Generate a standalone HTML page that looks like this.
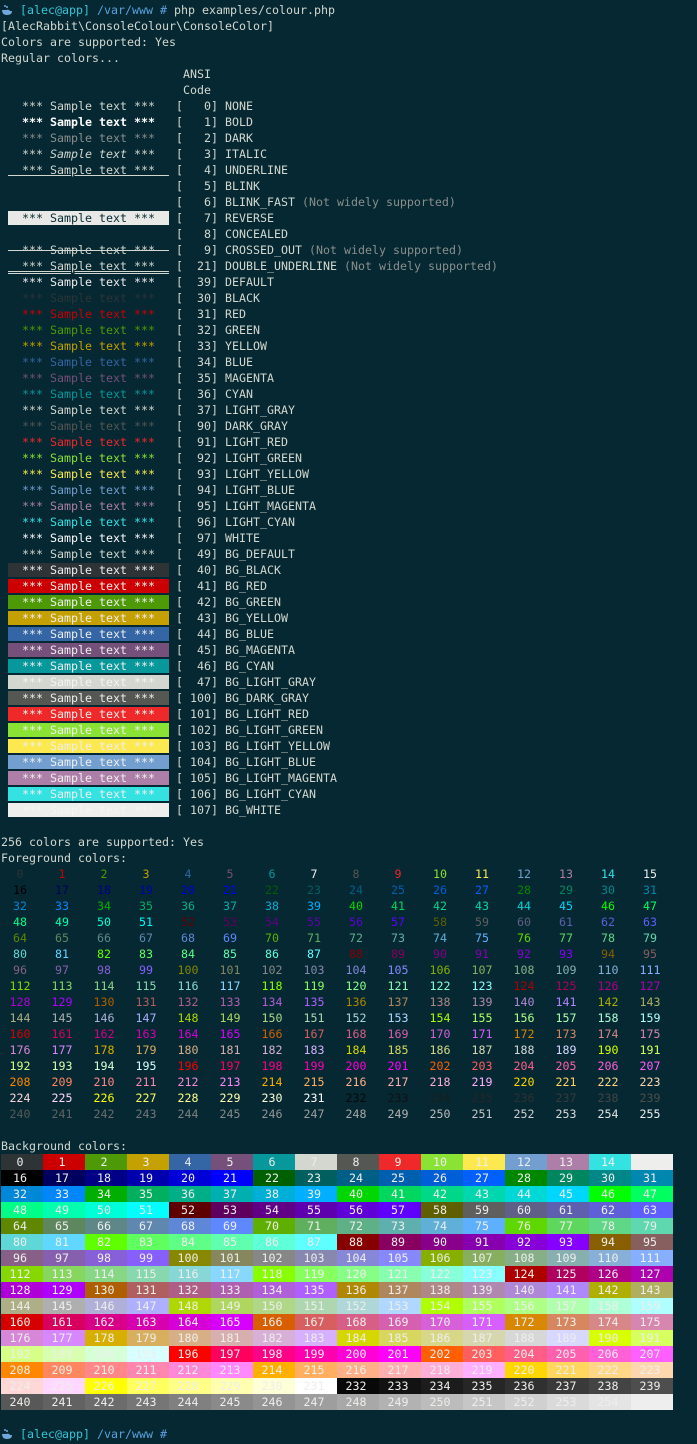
<!DOCTYPE html>
<html><head><meta charset="utf-8"><style>
html,body{margin:0;padding:0;background:#052832;}
body{width:697px;height:1444px;overflow:hidden;font-family:"DejaVu Sans Mono","Liberation Mono",monospace;font-size:11.63px;color:#d3d7cf;padding-top:2px;box-sizing:border-box;}
.l{white-space:pre;height:16px;line-height:16px;padding-left:1px;}
.p1{color:#34c6d6}.p2{color:#5aa2e0}
.n{color:#8a8f8c}
.bo{font-weight:bold;color:#fff}.dm{color:#8a8f8c}.it{font-style:italic}
.u{text-decoration:underline}.x{text-decoration:line-through}.du{text-decoration:underline double}
.rv{background:#e8e8e6;color:#052832}
.g{display:flex;margin-left:1px;height:16px;line-height:16px}
.g i{font-style:normal;width:42px;text-align:center;padding-right:4px;box-sizing:border-box;}
.bg i{color:#eeeeec}
svg{vertical-align:-2px}
</style></head><body>
<div class="l"><svg width="12" height="12" viewBox="0 0 12 12"><path d="M1 6 Q1 11 6 11 Q11 11 11 7 L9 7 Q8 5 5 6 Z" fill="#6fa8dc"/><circle cx="4" cy="2" r="1" fill="#6fa8dc"/><circle cx="6" cy="3" r="1" fill="#6fa8dc"/></svg> <span class="p1">[alec@app]</span> <span class="p2">/var/www #</span> php examples/colour.php</div>
<div class="l">[AlecRabbit\ConsoleColour\ConsoleColor]</div>
<div class="l">Colors are supported: Yes</div>
<div class="l">Regular colors...</div>
<div class="l">                          ANSI</div>
<div class="l">                          Code</div>
<div class="l"> <span>  *** Sample text ***  </span> [   0] NONE</div>
<div class="l"> <span class="bo">  *** Sample text ***  </span> [   1] BOLD</div>
<div class="l"> <span class="dm">  *** Sample text ***  </span> [   2] DARK</div>
<div class="l"> <span class="it">  *** Sample text ***  </span> [   3] ITALIC</div>
<div class="l"> <span class="u">  *** Sample text ***  </span> [   4] UNDERLINE</div>
<div class="l">                         [   5] BLINK</div>
<div class="l">                         [   6] BLINK_FAST <span class="n">(Not widely supported)</span></div>
<div class="l"> <span class="rv">  *** Sample text ***  </span> [   7] REVERSE</div>
<div class="l">                         [   8] CONCEALED</div>
<div class="l"> <span class="x">  *** Sample text ***  </span> [   9] CROSSED_OUT <span class="n">(Not widely supported)</span></div>
<div class="l"> <span class="du">  *** Sample text ***  </span> [  21] DOUBLE_UNDERLINE <span class="n">(Not widely supported)</span></div>
<div class="l"> <span style="color:#eeeeec">  *** Sample text ***  </span> [  39] DEFAULT</div>
<div class="l"> <span style="color:#2e3436">  *** Sample text ***  </span> [  30] BLACK</div>
<div class="l"> <span style="color:#cc0000">  *** Sample text ***  </span> [  31] RED</div>
<div class="l"> <span style="color:#4e9a06">  *** Sample text ***  </span> [  32] GREEN</div>
<div class="l"> <span style="color:#c4a000">  *** Sample text ***  </span> [  33] YELLOW</div>
<div class="l"> <span style="color:#3465a4">  *** Sample text ***  </span> [  34] BLUE</div>
<div class="l"> <span style="color:#75507b">  *** Sample text ***  </span> [  35] MAGENTA</div>
<div class="l"> <span style="color:#06989a">  *** Sample text ***  </span> [  36] CYAN</div>
<div class="l"> <span style="color:#d3d7cf">  *** Sample text ***  </span> [  37] LIGHT_GRAY</div>
<div class="l"> <span style="color:#555753">  *** Sample text ***  </span> [  90] DARK_GRAY</div>
<div class="l"> <span style="color:#ef2929">  *** Sample text ***  </span> [  91] LIGHT_RED</div>
<div class="l"> <span style="color:#8ae234">  *** Sample text ***  </span> [  92] LIGHT_GREEN</div>
<div class="l"> <span style="color:#fce94f">  *** Sample text ***  </span> [  93] LIGHT_YELLOW</div>
<div class="l"> <span style="color:#729fcf">  *** Sample text ***  </span> [  94] LIGHT_BLUE</div>
<div class="l"> <span style="color:#ad7fa8">  *** Sample text ***  </span> [  95] LIGHT_MAGENTA</div>
<div class="l"> <span style="color:#34e2e2">  *** Sample text ***  </span> [  96] LIGHT_CYAN</div>
<div class="l"> <span style="color:#ffffff">  *** Sample text ***  </span> [  97] WHITE</div>
<div class="l"> <span>  *** Sample text ***  </span> [  49] BG_DEFAULT</div>
<div class="l"> <span style="background:#2e3436;color:#eee">  *** Sample text ***  </span> [  40] BG_BLACK</div>
<div class="l"> <span style="background:#cc0000;color:#eee">  *** Sample text ***  </span> [  41] BG_RED</div>
<div class="l"> <span style="background:#4e9a06;color:#eee">  *** Sample text ***  </span> [  42] BG_GREEN</div>
<div class="l"> <span style="background:#c4a000;color:#eee">  *** Sample text ***  </span> [  43] BG_YELLOW</div>
<div class="l"> <span style="background:#3465a4;color:#eee">  *** Sample text ***  </span> [  44] BG_BLUE</div>
<div class="l"> <span style="background:#75507b;color:#eee">  *** Sample text ***  </span> [  45] BG_MAGENTA</div>
<div class="l"> <span style="background:#06989a;color:#eee">  *** Sample text ***  </span> [  46] BG_CYAN</div>
<div class="l"> <span style="background:#d3d7cf;color:#f4f4f4">  *** Sample text ***  </span> [  47] BG_LIGHT_GRAY</div>
<div class="l"> <span style="background:#555753;color:#eee">  *** Sample text ***  </span> [ 100] BG_DARK_GRAY</div>
<div class="l"> <span style="background:#ef2929;color:#eee">  *** Sample text ***  </span> [ 101] BG_LIGHT_RED</div>
<div class="l"> <span style="background:#8ae234;color:#eee">  *** Sample text ***  </span> [ 102] BG_LIGHT_GREEN</div>
<div class="l"> <span style="background:#fce94f;color:#eee">  *** Sample text ***  </span> [ 103] BG_LIGHT_YELLOW</div>
<div class="l"> <span style="background:#729fcf;color:#eee">  *** Sample text ***  </span> [ 104] BG_LIGHT_BLUE</div>
<div class="l"> <span style="background:#ad7fa8;color:#eee">  *** Sample text ***  </span> [ 105] BG_LIGHT_MAGENTA</div>
<div class="l"> <span style="background:#34e2e2;color:#eee">  *** Sample text ***  </span> [ 106] BG_LIGHT_CYAN</div>
<div class="l"> <span style="background:#eeeeec;color:#f4f4f4">  *** Sample text ***  </span> [ 107] BG_WHITE</div>
<div class="l"> </div>
<div class="l">256 colors are supported: Yes</div>
<div class="l">Foreground colors:</div>
<div class="g"><i style="color:#2e3436">0</i><i style="color:#cc0000">1</i><i style="color:#4e9a06">2</i><i style="color:#c4a000">3</i><i style="color:#3465a4">4</i><i style="color:#75507b">5</i><i style="color:#06989a">6</i><i style="color:#eeeeec">7</i><i style="color:#555753">8</i><i style="color:#ef2929">9</i><i style="color:#8ae234">10</i><i style="color:#fce94f">11</i><i style="color:#729fcf">12</i><i style="color:#ad7fa8">13</i><i style="color:#34e2e2">14</i><i style="color:#eeeeec">15</i></div>
<div class="g"><i style="color:#000000">16</i><i style="color:#00005f">17</i><i style="color:#000087">18</i><i style="color:#0000af">19</i><i style="color:#0000d7">20</i><i style="color:#0000ff">21</i><i style="color:#005f00">22</i><i style="color:#005f5f">23</i><i style="color:#005f87">24</i><i style="color:#005faf">25</i><i style="color:#005fd7">26</i><i style="color:#005fff">27</i><i style="color:#008700">28</i><i style="color:#00875f">29</i><i style="color:#008787">30</i><i style="color:#0087af">31</i></div>
<div class="g"><i style="color:#0087d7">32</i><i style="color:#0087ff">33</i><i style="color:#00af00">34</i><i style="color:#00af5f">35</i><i style="color:#00af87">36</i><i style="color:#00afaf">37</i><i style="color:#00afd7">38</i><i style="color:#00afff">39</i><i style="color:#00d700">40</i><i style="color:#00d75f">41</i><i style="color:#00d787">42</i><i style="color:#00d7af">43</i><i style="color:#00d7d7">44</i><i style="color:#00d7ff">45</i><i style="color:#00ff00">46</i><i style="color:#00ff5f">47</i></div>
<div class="g"><i style="color:#00ff87">48</i><i style="color:#00ffaf">49</i><i style="color:#00ffd7">50</i><i style="color:#00ffff">51</i><i style="color:#5f0000">52</i><i style="color:#5f005f">53</i><i style="color:#5f0087">54</i><i style="color:#5f00af">55</i><i style="color:#5f00d7">56</i><i style="color:#5f00ff">57</i><i style="color:#5f5f00">58</i><i style="color:#5f5f5f">59</i><i style="color:#5f5f87">60</i><i style="color:#5f5faf">61</i><i style="color:#5f5fd7">62</i><i style="color:#5f5fff">63</i></div>
<div class="g"><i style="color:#5f8700">64</i><i style="color:#5f875f">65</i><i style="color:#5f8787">66</i><i style="color:#5f87af">67</i><i style="color:#5f87d7">68</i><i style="color:#5f87ff">69</i><i style="color:#5faf00">70</i><i style="color:#5faf5f">71</i><i style="color:#5faf87">72</i><i style="color:#5fafaf">73</i><i style="color:#5fafd7">74</i><i style="color:#5fafff">75</i><i style="color:#5fd700">76</i><i style="color:#5fd75f">77</i><i style="color:#5fd787">78</i><i style="color:#5fd7af">79</i></div>
<div class="g"><i style="color:#5fd7d7">80</i><i style="color:#5fd7ff">81</i><i style="color:#5fff00">82</i><i style="color:#5fff5f">83</i><i style="color:#5fff87">84</i><i style="color:#5fffaf">85</i><i style="color:#5fffd7">86</i><i style="color:#5fffff">87</i><i style="color:#870000">88</i><i style="color:#87005f">89</i><i style="color:#870087">90</i><i style="color:#8700af">91</i><i style="color:#8700d7">92</i><i style="color:#8700ff">93</i><i style="color:#875f00">94</i><i style="color:#875f5f">95</i></div>
<div class="g"><i style="color:#875f87">96</i><i style="color:#875faf">97</i><i style="color:#875fd7">98</i><i style="color:#875fff">99</i><i style="color:#878700">100</i><i style="color:#87875f">101</i><i style="color:#878787">102</i><i style="color:#8787af">103</i><i style="color:#8787d7">104</i><i style="color:#8787ff">105</i><i style="color:#87af00">106</i><i style="color:#87af5f">107</i><i style="color:#87af87">108</i><i style="color:#87afaf">109</i><i style="color:#87afd7">110</i><i style="color:#87afff">111</i></div>
<div class="g"><i style="color:#87d700">112</i><i style="color:#87d75f">113</i><i style="color:#87d787">114</i><i style="color:#87d7af">115</i><i style="color:#87d7d7">116</i><i style="color:#87d7ff">117</i><i style="color:#87ff00">118</i><i style="color:#87ff5f">119</i><i style="color:#87ff87">120</i><i style="color:#87ffaf">121</i><i style="color:#87ffd7">122</i><i style="color:#87ffff">123</i><i style="color:#af0000">124</i><i style="color:#af005f">125</i><i style="color:#af0087">126</i><i style="color:#af00af">127</i></div>
<div class="g"><i style="color:#af00d7">128</i><i style="color:#af00ff">129</i><i style="color:#af5f00">130</i><i style="color:#af5f5f">131</i><i style="color:#af5f87">132</i><i style="color:#af5faf">133</i><i style="color:#af5fd7">134</i><i style="color:#af5fff">135</i><i style="color:#af8700">136</i><i style="color:#af875f">137</i><i style="color:#af8787">138</i><i style="color:#af87af">139</i><i style="color:#af87d7">140</i><i style="color:#af87ff">141</i><i style="color:#afaf00">142</i><i style="color:#afaf5f">143</i></div>
<div class="g"><i style="color:#afaf87">144</i><i style="color:#afafaf">145</i><i style="color:#afafd7">146</i><i style="color:#afafff">147</i><i style="color:#afd700">148</i><i style="color:#afd75f">149</i><i style="color:#afd787">150</i><i style="color:#afd7af">151</i><i style="color:#afd7d7">152</i><i style="color:#afd7ff">153</i><i style="color:#afff00">154</i><i style="color:#afff5f">155</i><i style="color:#afff87">156</i><i style="color:#afffaf">157</i><i style="color:#afffd7">158</i><i style="color:#afffff">159</i></div>
<div class="g"><i style="color:#d70000">160</i><i style="color:#d7005f">161</i><i style="color:#d70087">162</i><i style="color:#d700af">163</i><i style="color:#d700d7">164</i><i style="color:#d700ff">165</i><i style="color:#d75f00">166</i><i style="color:#d75f5f">167</i><i style="color:#d75f87">168</i><i style="color:#d75faf">169</i><i style="color:#d75fd7">170</i><i style="color:#d75fff">171</i><i style="color:#d78700">172</i><i style="color:#d7875f">173</i><i style="color:#d78787">174</i><i style="color:#d787af">175</i></div>
<div class="g"><i style="color:#d787d7">176</i><i style="color:#d787ff">177</i><i style="color:#d7af00">178</i><i style="color:#d7af5f">179</i><i style="color:#d7af87">180</i><i style="color:#d7afaf">181</i><i style="color:#d7afd7">182</i><i style="color:#d7afff">183</i><i style="color:#d7d700">184</i><i style="color:#d7d75f">185</i><i style="color:#d7d787">186</i><i style="color:#d7d7af">187</i><i style="color:#d7d7d7">188</i><i style="color:#d7d7ff">189</i><i style="color:#d7ff00">190</i><i style="color:#d7ff5f">191</i></div>
<div class="g"><i style="color:#d7ff87">192</i><i style="color:#d7ffaf">193</i><i style="color:#d7ffd7">194</i><i style="color:#d7ffff">195</i><i style="color:#ff0000">196</i><i style="color:#ff005f">197</i><i style="color:#ff0087">198</i><i style="color:#ff00af">199</i><i style="color:#ff00d7">200</i><i style="color:#ff00ff">201</i><i style="color:#ff5f00">202</i><i style="color:#ff5f5f">203</i><i style="color:#ff5f87">204</i><i style="color:#ff5faf">205</i><i style="color:#ff5fd7">206</i><i style="color:#ff5fff">207</i></div>
<div class="g"><i style="color:#ff8700">208</i><i style="color:#ff875f">209</i><i style="color:#ff8787">210</i><i style="color:#ff87af">211</i><i style="color:#ff87d7">212</i><i style="color:#ff87ff">213</i><i style="color:#ffaf00">214</i><i style="color:#ffaf5f">215</i><i style="color:#ffaf87">216</i><i style="color:#ffafaf">217</i><i style="color:#ffafd7">218</i><i style="color:#ffafff">219</i><i style="color:#ffd700">220</i><i style="color:#ffd75f">221</i><i style="color:#ffd787">222</i><i style="color:#ffd7af">223</i></div>
<div class="g"><i style="color:#ffd7d7">224</i><i style="color:#ffd7ff">225</i><i style="color:#ffff00">226</i><i style="color:#ffff5f">227</i><i style="color:#ffff87">228</i><i style="color:#ffffaf">229</i><i style="color:#ffffd7">230</i><i style="color:#ffffff">231</i><i style="color:#080808">232</i><i style="color:#121212">233</i><i style="color:#1c1c1c">234</i><i style="color:#262626">235</i><i style="color:#303030">236</i><i style="color:#3a3a3a">237</i><i style="color:#444444">238</i><i style="color:#4e4e4e">239</i></div>
<div class="g"><i style="color:#585858">240</i><i style="color:#626262">241</i><i style="color:#6c6c6c">242</i><i style="color:#767676">243</i><i style="color:#808080">244</i><i style="color:#8a8a8a">245</i><i style="color:#949494">246</i><i style="color:#9e9e9e">247</i><i style="color:#a8a8a8">248</i><i style="color:#b2b2b2">249</i><i style="color:#bcbcbc">250</i><i style="color:#c6c6c6">251</i><i style="color:#d0d0d0">252</i><i style="color:#dadada">253</i><i style="color:#e4e4e4">254</i><i style="color:#eeeeee">255</i></div>
<div class="l"> </div>
<div class="l">Background colors:</div>
<div class="g bg"><i style="background:#2e3436">0</i><i style="background:#cc0000">1</i><i style="background:#4e9a06">2</i><i style="background:#c4a000">3</i><i style="background:#3465a4">4</i><i style="background:#75507b">5</i><i style="background:#06989a">6</i><i style="background:#d3d7cf">7</i><i style="background:#555753">8</i><i style="background:#ef2929">9</i><i style="background:#8ae234">10</i><i style="background:#fce94f">11</i><i style="background:#729fcf">12</i><i style="background:#ad7fa8">13</i><i style="background:#34e2e2">14</i><i style="background:#eeeeec">15</i></div>
<div class="g bg"><i style="background:#000000">16</i><i style="background:#00005f">17</i><i style="background:#000087">18</i><i style="background:#0000af">19</i><i style="background:#0000d7">20</i><i style="background:#0000ff">21</i><i style="background:#005f00">22</i><i style="background:#005f5f">23</i><i style="background:#005f87">24</i><i style="background:#005faf">25</i><i style="background:#005fd7">26</i><i style="background:#005fff">27</i><i style="background:#008700">28</i><i style="background:#00875f">29</i><i style="background:#008787">30</i><i style="background:#0087af">31</i></div>
<div class="g bg"><i style="background:#0087d7">32</i><i style="background:#0087ff">33</i><i style="background:#00af00">34</i><i style="background:#00af5f">35</i><i style="background:#00af87">36</i><i style="background:#00afaf">37</i><i style="background:#00afd7">38</i><i style="background:#00afff">39</i><i style="background:#00d700">40</i><i style="background:#00d75f">41</i><i style="background:#00d787">42</i><i style="background:#00d7af">43</i><i style="background:#00d7d7">44</i><i style="background:#00d7ff">45</i><i style="background:#00ff00">46</i><i style="background:#00ff5f">47</i></div>
<div class="g bg"><i style="background:#00ff87">48</i><i style="background:#00ffaf">49</i><i style="background:#00ffd7">50</i><i style="background:#00ffff">51</i><i style="background:#5f0000">52</i><i style="background:#5f005f">53</i><i style="background:#5f0087">54</i><i style="background:#5f00af">55</i><i style="background:#5f00d7">56</i><i style="background:#5f00ff">57</i><i style="background:#5f5f00">58</i><i style="background:#5f5f5f">59</i><i style="background:#5f5f87">60</i><i style="background:#5f5faf">61</i><i style="background:#5f5fd7">62</i><i style="background:#5f5fff">63</i></div>
<div class="g bg"><i style="background:#5f8700">64</i><i style="background:#5f875f">65</i><i style="background:#5f8787">66</i><i style="background:#5f87af">67</i><i style="background:#5f87d7">68</i><i style="background:#5f87ff">69</i><i style="background:#5faf00">70</i><i style="background:#5faf5f">71</i><i style="background:#5faf87">72</i><i style="background:#5fafaf">73</i><i style="background:#5fafd7">74</i><i style="background:#5fafff">75</i><i style="background:#5fd700">76</i><i style="background:#5fd75f">77</i><i style="background:#5fd787">78</i><i style="background:#5fd7af">79</i></div>
<div class="g bg"><i style="background:#5fd7d7">80</i><i style="background:#5fd7ff">81</i><i style="background:#5fff00">82</i><i style="background:#5fff5f">83</i><i style="background:#5fff87">84</i><i style="background:#5fffaf">85</i><i style="background:#5fffd7">86</i><i style="background:#5fffff">87</i><i style="background:#870000">88</i><i style="background:#87005f">89</i><i style="background:#870087">90</i><i style="background:#8700af">91</i><i style="background:#8700d7">92</i><i style="background:#8700ff">93</i><i style="background:#875f00">94</i><i style="background:#875f5f">95</i></div>
<div class="g bg"><i style="background:#875f87">96</i><i style="background:#875faf">97</i><i style="background:#875fd7">98</i><i style="background:#875fff">99</i><i style="background:#878700">100</i><i style="background:#87875f">101</i><i style="background:#878787">102</i><i style="background:#8787af">103</i><i style="background:#8787d7">104</i><i style="background:#8787ff">105</i><i style="background:#87af00">106</i><i style="background:#87af5f">107</i><i style="background:#87af87">108</i><i style="background:#87afaf">109</i><i style="background:#87afd7">110</i><i style="background:#87afff">111</i></div>
<div class="g bg"><i style="background:#87d700">112</i><i style="background:#87d75f">113</i><i style="background:#87d787">114</i><i style="background:#87d7af">115</i><i style="background:#87d7d7">116</i><i style="background:#87d7ff">117</i><i style="background:#87ff00">118</i><i style="background:#87ff5f">119</i><i style="background:#87ff87">120</i><i style="background:#87ffaf">121</i><i style="background:#87ffd7">122</i><i style="background:#87ffff">123</i><i style="background:#af0000">124</i><i style="background:#af005f">125</i><i style="background:#af0087">126</i><i style="background:#af00af">127</i></div>
<div class="g bg"><i style="background:#af00d7">128</i><i style="background:#af00ff">129</i><i style="background:#af5f00">130</i><i style="background:#af5f5f">131</i><i style="background:#af5f87">132</i><i style="background:#af5faf">133</i><i style="background:#af5fd7">134</i><i style="background:#af5fff">135</i><i style="background:#af8700">136</i><i style="background:#af875f">137</i><i style="background:#af8787">138</i><i style="background:#af87af">139</i><i style="background:#af87d7">140</i><i style="background:#af87ff">141</i><i style="background:#afaf00">142</i><i style="background:#afaf5f">143</i></div>
<div class="g bg"><i style="background:#afaf87">144</i><i style="background:#afafaf">145</i><i style="background:#afafd7">146</i><i style="background:#afafff">147</i><i style="background:#afd700">148</i><i style="background:#afd75f">149</i><i style="background:#afd787">150</i><i style="background:#afd7af">151</i><i style="background:#afd7d7">152</i><i style="background:#afd7ff">153</i><i style="background:#afff00">154</i><i style="background:#afff5f">155</i><i style="background:#afff87">156</i><i style="background:#afffaf">157</i><i style="background:#afffd7">158</i><i style="background:#afffff">159</i></div>
<div class="g bg"><i style="background:#d70000">160</i><i style="background:#d7005f">161</i><i style="background:#d70087">162</i><i style="background:#d700af">163</i><i style="background:#d700d7">164</i><i style="background:#d700ff">165</i><i style="background:#d75f00">166</i><i style="background:#d75f5f">167</i><i style="background:#d75f87">168</i><i style="background:#d75faf">169</i><i style="background:#d75fd7">170</i><i style="background:#d75fff">171</i><i style="background:#d78700">172</i><i style="background:#d7875f">173</i><i style="background:#d78787">174</i><i style="background:#d787af">175</i></div>
<div class="g bg"><i style="background:#d787d7">176</i><i style="background:#d787ff">177</i><i style="background:#d7af00">178</i><i style="background:#d7af5f">179</i><i style="background:#d7af87">180</i><i style="background:#d7afaf">181</i><i style="background:#d7afd7">182</i><i style="background:#d7afff">183</i><i style="background:#d7d700">184</i><i style="background:#d7d75f">185</i><i style="background:#d7d787">186</i><i style="background:#d7d7af">187</i><i style="background:#d7d7d7">188</i><i style="background:#d7d7ff">189</i><i style="background:#d7ff00">190</i><i style="background:#d7ff5f">191</i></div>
<div class="g bg"><i style="background:#d7ff87">192</i><i style="background:#d7ffaf">193</i><i style="background:#d7ffd7">194</i><i style="background:#d7ffff">195</i><i style="background:#ff0000">196</i><i style="background:#ff005f">197</i><i style="background:#ff0087">198</i><i style="background:#ff00af">199</i><i style="background:#ff00d7">200</i><i style="background:#ff00ff">201</i><i style="background:#ff5f00">202</i><i style="background:#ff5f5f">203</i><i style="background:#ff5f87">204</i><i style="background:#ff5faf">205</i><i style="background:#ff5fd7">206</i><i style="background:#ff5fff">207</i></div>
<div class="g bg"><i style="background:#ff8700">208</i><i style="background:#ff875f">209</i><i style="background:#ff8787">210</i><i style="background:#ff87af">211</i><i style="background:#ff87d7">212</i><i style="background:#ff87ff">213</i><i style="background:#ffaf00">214</i><i style="background:#ffaf5f">215</i><i style="background:#ffaf87">216</i><i style="background:#ffafaf">217</i><i style="background:#ffafd7">218</i><i style="background:#ffafff">219</i><i style="background:#ffd700">220</i><i style="background:#ffd75f">221</i><i style="background:#ffd787">222</i><i style="background:#ffd7af">223</i></div>
<div class="g bg"><i style="background:#ffd7d7">224</i><i style="background:#ffd7ff">225</i><i style="background:#ffff00">226</i><i style="background:#ffff5f">227</i><i style="background:#ffff87">228</i><i style="background:#ffffaf">229</i><i style="background:#ffffd7">230</i><i style="background:#ffffff">231</i><i style="background:#080808">232</i><i style="background:#121212">233</i><i style="background:#1c1c1c">234</i><i style="background:#262626">235</i><i style="background:#303030">236</i><i style="background:#3a3a3a">237</i><i style="background:#444444">238</i><i style="background:#4e4e4e">239</i></div>
<div class="g bg"><i style="background:#585858">240</i><i style="background:#626262">241</i><i style="background:#6c6c6c">242</i><i style="background:#767676">243</i><i style="background:#808080">244</i><i style="background:#8a8a8a">245</i><i style="background:#949494">246</i><i style="background:#9e9e9e">247</i><i style="background:#a8a8a8">248</i><i style="background:#b2b2b2">249</i><i style="background:#bcbcbc">250</i><i style="background:#c6c6c6">251</i><i style="background:#d0d0d0">252</i><i style="background:#dadada">253</i><i style="background:#e4e4e4">254</i><i style="background:#eeeeee">255</i></div>
<div class="l"> </div>
<div class="l"><svg width="12" height="12" viewBox="0 0 12 12"><path d="M1 6 Q1 11 6 11 Q11 11 11 7 L9 7 Q8 5 5 6 Z" fill="#6fa8dc"/><circle cx="4" cy="2" r="1" fill="#6fa8dc"/><circle cx="6" cy="3" r="1" fill="#6fa8dc"/></svg> <span class="p1">[alec@app]</span> <span class="p2">/var/www #</span></div>
</body></html>
